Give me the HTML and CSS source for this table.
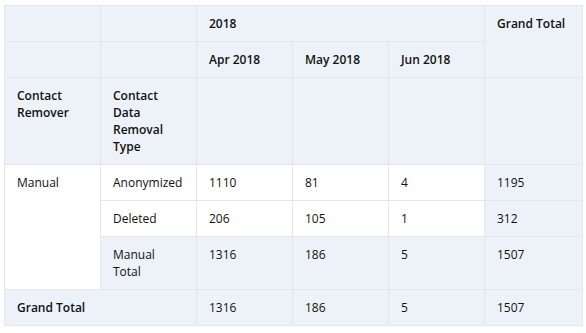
FILE: index.html
```html
<!DOCTYPE html>
<html>
<head>
<meta charset="utf-8">
<link rel="stylesheet" href="styles.css">
</head>
<body>
<table class="pivot">
  <colgroup>
    <col class="c1"><col class="c2"><col class="c3"><col class="c4"><col class="c5"><col class="c6">
  </colgroup>
  <tr>
    <th class="hd"></th>
    <th class="hd"></th>
    <th class="hd" colspan="3">2018</th>
    <th class="hd" rowspan="2">Grand Total</th>
  </tr>
  <tr>
    <th class="hd"></th>
    <th class="hd"></th>
    <th class="hd">Apr 2018</th>
    <th class="hd">May 2018</th>
    <th class="hd">Jun 2018</th>
  </tr>
  <tr>
    <th class="hd">Contact Remover</th>
    <th class="hd">Contact Data Removal Type</th>
    <th class="hd"></th>
    <th class="hd"></th>
    <th class="hd"></th>
    <th class="hd"></th>
  </tr>
  <tr>
    <td class="wh" rowspan="3">Manual</td>
    <td class="wh">Anonymized</td>
    <td class="wh">1110</td>
    <td class="wh">81</td>
    <td class="wh">4</td>
    <td class="tot">1195</td>
  </tr>
  <tr>
    <td class="wh">Deleted</td>
    <td class="wh">206</td>
    <td class="wh">105</td>
    <td class="wh">1</td>
    <td class="tot">312</td>
  </tr>
  <tr>
    <td class="tot">Manual Total</td>
    <td class="tot">1316</td>
    <td class="tot">186</td>
    <td class="tot">5</td>
    <td class="tot">1507</td>
  </tr>
  <tr>
    <th class="hd" colspan="2">Grand Total</th>
    <td class="tot">1316</td>
    <td class="tot">186</td>
    <td class="tot">5</td>
    <td class="tot">1507</td>
  </tr>
</table>
</body>
</html>
```
FILE: styles.css
```css
html, body {
  margin: 0;
  background: #ffffff;
}
body {
  padding: 5px 4px;
  font-family: "Open Sans", "Liberation Sans", sans-serif;
  font-size: 12px;
  color: #111;
}
.pivot {
  width: 578px;
  table-layout: fixed;
  border-collapse: collapse;
}
.c1, .c2, .c3, .c4, .c5 { width: 96px; }
.c6 { width: 98px; }
.pivot th, .pivot td {
  border: 1px solid #e3e6ea;
  padding: 9px 12px 9px 12px;
  line-height: 17px;
  text-align: left;
  vertical-align: top;
}
.pivot th { font-weight: 600; }
.pivot td { font-weight: 400; }
.hd, .tot { background: #edf2f8; }
.wh { background: #ffffff; }
```
